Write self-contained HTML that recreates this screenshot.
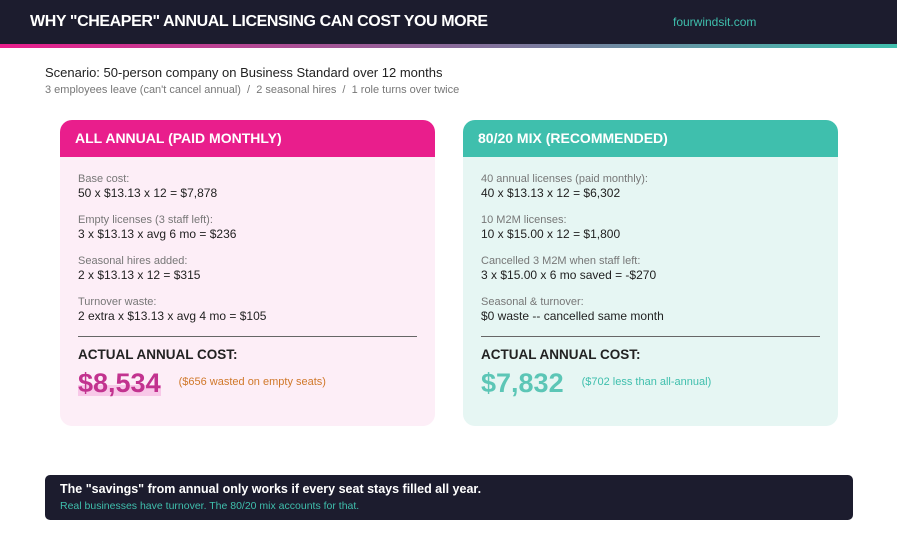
<!DOCTYPE html>
<html><head><meta charset="utf-8"><style>
*{margin:0;padding:0;box-sizing:border-box}
body{width:897px;height:538px;background:#fff;font-family:"Liberation Sans",sans-serif;position:relative;overflow:hidden;color:#222}
.hdr{position:absolute;left:0;top:0;width:897px;height:44px;background:#1c1c2e}
.hdr h1{position:absolute;left:30px;top:13px;font-size:16px;color:#fff;font-weight:bold;letter-spacing:-0.4px}
.hdr .site{position:absolute;left:673px;top:15px;font-size:12px;color:#3fbfad}
.bar{position:absolute;left:0;top:44px;width:897px;height:4px;background:linear-gradient(90deg,#e91e8c,#8a6a9a 50%,#3fbfad)}
.t1{position:absolute;left:45px;top:65px;font-size:13px;color:#222}
.t2{position:absolute;left:45px;top:84px;font-size:11px;color:#777}
.card{position:absolute;top:120px;width:375px;height:306px;border-radius:12px;overflow:hidden}
.card .h{height:37px;padding:10px 15px;color:#fff;font-weight:bold;font-size:14px}
.card .b{padding:15px 18px}
.l{font-size:11px;color:#777;line-height:14px}
.v{font-size:12px;color:#222;line-height:15px;margin-bottom:12px;margin-top:0px;font-weight:500}
hr{border:0;border-top:1px solid #666;margin:0 0 10px}
.ac{font-weight:bold;font-size:13.5px;color:#222}
.big{display:inline-block;font-size:27px;font-weight:bold;margin-top:6px}
.note{font-size:11px;margin-left:18px;vertical-align:7px}
.foot{position:absolute;left:45px;top:475px;width:808px;height:45px;background:#1c1c2e;border-radius:5px;padding:7px 15px}
.foot b{color:#fff;font-size:12.5px;display:block}
.foot span{color:#3fbfad;font-size:10.5px;display:block;margin-top:4px}
</style></head><body>
<div class="hdr"><h1>WHY "CHEAPER" ANNUAL LICENSING CAN COST YOU MORE</h1><div class="site">fourwindsit.com</div></div>
<div class="bar"></div>
<div class="t1">Scenario: 50-person company on Business Standard over 12 months</div>
<div class="t2">3 employees leave (can't cancel annual) &nbsp;/&nbsp; 2 seasonal hires &nbsp;/&nbsp; 1 role turns over twice</div>

<div class="card" style="left:60px;background:#fdeef7">
<div class="h" style="background:#e91e8c">ALL ANNUAL (PAID MONTHLY)</div>
<div class="b">
<div class="l">Base cost:</div><div class="v">50 x $13.13 x 12 = $7,878</div>
<div class="l">Empty licenses (3 staff left):</div><div class="v">3 x $13.13 x avg 6 mo = $236</div>
<div class="l">Seasonal hires added:</div><div class="v">2 x $13.13 x 12 = $315</div>
<div class="l">Turnover waste:</div><div class="v">2 extra x $13.13 x avg 4 mo = $105</div>
<hr>
<div class="ac">ACTUAL ANNUAL COST:</div>
<div><span class="big" style="color:#c2338f;background:linear-gradient(transparent 55%,#f8c8e8 55%,#f8c8e8 90%,transparent 90%)">$8,534</span><span class="note" style="color:#d0782a">($656 wasted on empty seats)</span></div>
</div></div>

<div class="card" style="left:463px;background:#e6f6f3">
<div class="h" style="background:#3fbfad">80/20 MIX (RECOMMENDED)</div>
<div class="b">
<div class="l">40 annual licenses (paid monthly):</div><div class="v">40 x $13.13 x 12 = $6,302</div>
<div class="l">10 M2M licenses:</div><div class="v">10 x $15.00 x 12 = $1,800</div>
<div class="l">Cancelled 3 M2M when staff left:</div><div class="v">3 x $15.00 x 6 mo saved = -$270</div>
<div class="l">Seasonal &amp; turnover:</div><div class="v">$0 waste -- cancelled same month</div>
<hr>
<div class="ac">ACTUAL ANNUAL COST:</div>
<div><span class="big" style="color:#5cc6b6">$7,832</span><span class="note" style="color:#3fbfad">($702 less than all-annual)</span></div>
</div></div>

<div class="foot"><b>The "savings" from annual only works if every seat stays filled all year.</b><span>Real businesses have turnover. The 80/20 mix accounts for that.</span></div>
</body></html>
